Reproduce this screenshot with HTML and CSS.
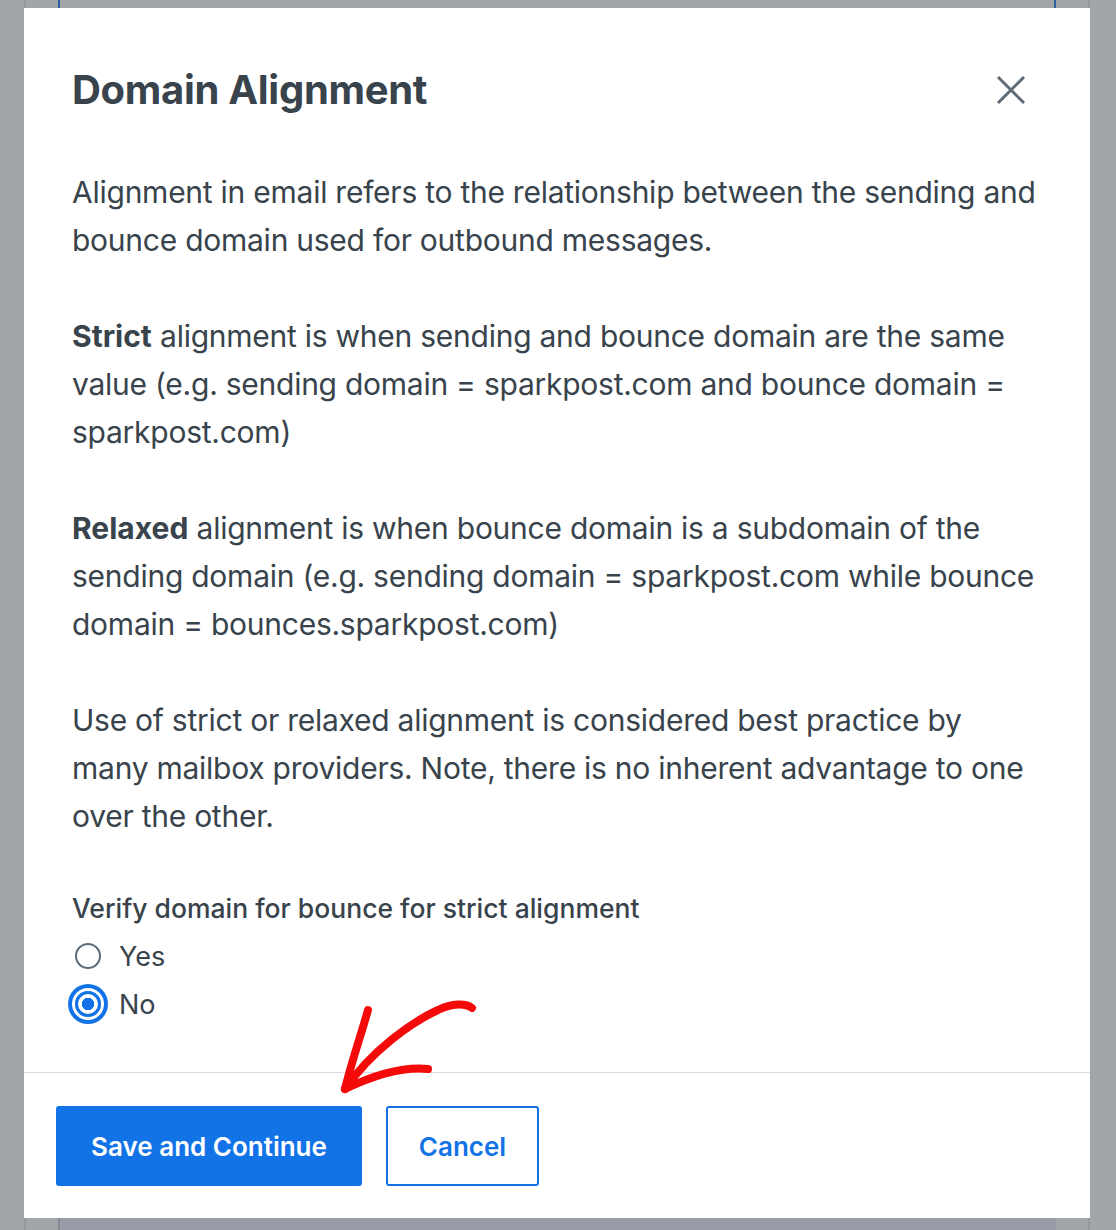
FILE: index.html
```html
<!DOCTYPE html>
<html lang="en">
<head>
    <meta charset="UTF-8">
    <meta name="viewport" content="width=device-width, initial-scale=1.0">
    <title>Domain Alignment</title>
    <link rel="stylesheet" href="styles.css">
</head>
<body>
  <!-- page behind the modal overlay -->
  <div class="page-behind">
    <div class="page-panel"></div>
    <div class="page-strip"></div>
  </div>

  <div class="modal">
    <div class="modal-body">
      <div class="modal-header">
        <h1>Domain Alignment</h1>
        <button class="close-btn" aria-label="Close">
          <svg width="30" height="30" viewBox="0 0 30 30">
            <path d="M2 2 L28 28 M28 2 L2 28" stroke="#5e6b77" stroke-width="3" fill="none"/>
          </svg>
        </button>
      </div>

      <p>Alignment in email refers to the relationship between the sending and bounce domain used for outbound messages.</p>
      <p><strong>Strict</strong> alignment is when sending and bounce domain are the same value (e.g. sending domain = sparkpost.com and bounce domain = sparkpost.com)</p>
      <p><strong>Relaxed</strong> alignment is when bounce domain is a subdomain of the sending domain (e.g. sending domain = sparkpost.com while bounce domain = bounces.sparkpost.com)</p>
      <p>Use of strict or relaxed alignment is considered best practice by many mailbox providers. Note, there is no inherent advantage to one over the other.</p>

      <fieldset class="radio-group">
        <legend>Verify domain for bounce for strict alignment</legend>
        <label class="radio">
          <span class="radio-dot"></span>
          Yes
        </label>
        <label class="radio checked">
          <span class="radio-dot"></span>
          No
        </label>
      </fieldset>
    </div>

    <div class="modal-footer">
      <button class="btn btn-primary">Save and Continue</button>
      <button class="btn btn-outline">Cancel</button>
    </div>
  </div>

  <!-- hand drawn annotation -->
  <svg class="arrow" width="160" height="110" viewBox="330 995 160 110">
    <g stroke="#f50a0a" stroke-width="8" stroke-linecap="round" stroke-linejoin="round" fill="none">
      <path d="M472 1008 C466 1003 452 1003 438 1010 C412 1022 372 1050 345 1089"/>
      <path d="M368 1010 C362 1032 352 1060 345 1089"/>
      <path d="M345 1089 C368 1078 398 1066 428 1069"/>
    </g>
  </svg>
</body>
</html>
```

FILE: styles.css
```css
body {
    margin: 0;
    padding: 0;
    background-color: #a2a5a8;
    font-family: Inter, "Liberation Sans", sans-serif;
    color: #38434c;
    height: 1230px;
    overflow: hidden;
    position: relative;
}

.page-behind {
    position: absolute;
    left: 24px;
    top: 0;
    width: 1062px;
    height: 1230px;
    border-left: 2px solid #96999c;
    border-right: 2px solid #96999c;
}

.page-panel {
    position: absolute;
    left: 32px;
    top: 0;
    width: 994px;
    height: 20px;
    border-left: 2px solid #2f5f9e;
    border-right: 2px solid #2f5f9e;
}

.page-strip {
    position: absolute;
    left: 32px;
    bottom: 0;
    width: 996px;
    height: 20px;
    background-color: #979ca6;
    border-left: 2px solid #868b91;
}

.modal {
    position: relative;
    margin: 8px 0 0 24px;
    width: 1066px;
    height: 1210px;
    background-color: #fff;
    display: flex;
    flex-direction: column;
}

.modal-body {
    flex: 1;
    padding: 58px 48px 0 48px;
}

.modal-header {
    display: flex;
    align-items: center;
    justify-content: space-between;
    margin-bottom: 54px;
}

h1 {
    margin: 0;
    font-size: 40px;
    line-height: 48px;
    font-weight: 700;
    letter-spacing: -0.3px;
}

.close-btn {
    width: 44px;
    height: 44px;
    margin-right: 9px;
    padding: 0;
    border: none;
    background: none;
    display: flex;
    align-items: center;
    justify-content: center;
}

p {
    margin: 0 0 48px 0;
    font-size: 30px;
    line-height: 48px;
    letter-spacing: -0.25px;
}

p strong {
    font-weight: 700;
    letter-spacing: 0;
}

.radio-group {
    border: none;
    margin: -4px 0 0 0;
    padding: 0;
}

.radio-group legend {
    padding: 0;
    font-size: 26.5px;
    font-weight: 500;
    line-height: 48px;
}

.radio {
    display: flex;
    align-items: center;
    gap: 18px;
    height: 48px;
    font-size: 27px;
}

.radio-dot {
    box-sizing: border-box;
    width: 26px;
    height: 26px;
    margin-left: 3px;
    border-radius: 50%;
    border: 2.5px solid #5e6b77;
    background-color: #fff;
}

.radio.checked .radio-dot {
    border: 3px solid #1273e6;
    background: radial-gradient(circle, #1273e6 0 6px, #fff 6.5px);
    box-shadow: 0 0 0 3px #fff, 0 0 0 7px #1273e6;
}

.modal-footer {
    border-top: 1px solid #d9dde1;
    padding: 33px 32px 32px 32px;
    display: flex;
    gap: 24px;
}

.btn {
    height: 80px;
    font-family: Inter, "Liberation Sans", sans-serif;
    font-size: 26px;
    font-weight: 600;
    border-radius: 3px;
    cursor: pointer;
}

.btn-primary {
    width: 306px;
    background-color: #1273e6;
    border: none;
    color: #fff;
}

.btn-outline {
    width: 153px;
    background-color: #fff;
    border: 2px solid #1273e6;
    color: #1273e6;
}

.arrow {
    position: absolute;
    left: 330px;
    top: 995px;
}
```
